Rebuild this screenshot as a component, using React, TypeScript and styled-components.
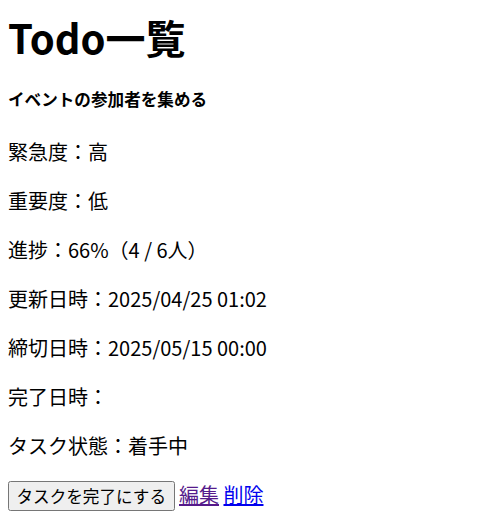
import React from "react";
import styled, { createGlobalStyle } from "styled-components";

const Global = createGlobalStyle`
  html { font-size: 20px; }
  body {
    margin: 8px;
    font-family: "Noto Sans CJK JP", "Noto Sans", sans-serif;
    font-size: 20px;
    color: #000;
    background: #fff;
  }
`;

const Page = styled.div`
  font-family: "Noto Sans CJK JP", "Noto Sans", sans-serif;
`;

const Title = styled.h1`
  font-size: 40px;
  font-weight: 700;
  margin: 0 0 20px;
`;

const Subtitle = styled.h5`
  font-size: 16.6px;
  font-weight: 700;
  margin: 20.7px 0 26.7px;
`;

const Field = styled.p`
  margin: 20px 0;
`;

const Actions = styled.div``;

const Button = styled.button`
  font-family: "Noto Sans CJK JP", sans-serif;
  font-size: 16.6px;
  padding: 1px 6.5px;
`;

const Link = styled.a<{ $visited?: boolean }>`
  color: ${(p) => (p.$visited ? "#551a8b" : "#0000ee")};
  text-decoration: underline;
  cursor: pointer;
`;

export default function App() {
  const fields = [
    "緊急度：高",
    "重要度：低",
    "進捗：66%（4 / 6人）",
    "更新日時：2025/04/25 01:02",
    "締切日時：2025/05/15 00:00",
    "完了日時：",
    "タスク状態：着手中",
  ];
  return (
    <Page lang="ja">
      <Global />
      <Title>Todo一覧</Title>
      <Subtitle>イベントの参加者を集める</Subtitle>
      {fields.map((f) => (
        <Field key={f}>{f}</Field>
      ))}
      <Actions>
        <Button>タスクを完了にする</Button> <Link $visited href="#edit">編集</Link>{" "}
        <Link href="#delete">削除</Link>
      </Actions>
    </Page>
  );
}
